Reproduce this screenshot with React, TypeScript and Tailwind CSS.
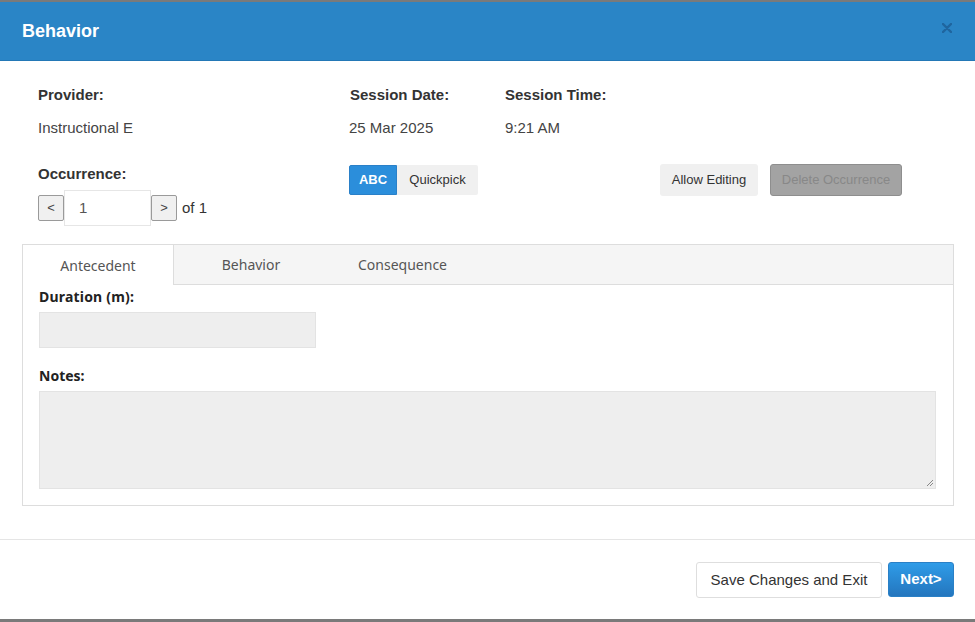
import React from "react"

const arial = { fontFamily: '"Liberation Sans", Arial, sans-serif' }
const segoe = { fontFamily: '"Noto Sans", "Open Sans", sans-serif' }

function Tab({ label, active = false, width }: { label: string; active?: boolean; width: string }) {
  return (
    <div
      className={
        active
          ? `${width} h-full flex items-center justify-center bg-white border-r border-[#dddddd] text-[14px] text-[#555]`
          : `${width} h-full flex items-center justify-center border-b border-[#dddddd] text-[14px] text-[#555]`
      }
      style={segoe}
    >
      {label}
    </div>
  )
}

export default function App() {
  return (
    <div className="w-[975px] h-[622px] bg-[#7a7a7a] pt-[2px] pb-[3px] overflow-hidden" style={arial}>
      <div className="h-full bg-white flex flex-col">
        {/* Header */}
        <div className="h-[59px] shrink-0 bg-[#2a85c6] border-b border-[#2378b6] flex items-center justify-between pl-[22px] pr-[23px]">
          <h4 className="text-white font-bold text-[18px]">Behavior</h4>
          <svg width="10" height="10" viewBox="0 0 10 10" className="mb-[6px] opacity-80">
            <path d="M1 1 L9 9 M9 1 L1 9" stroke="#1d5e96" strokeWidth="2.4" strokeLinecap="round" />
          </svg>
        </div>

        {/* Body */}
        <div className="pt-[26px] pl-[22px] pr-[21px]">
          <div className="pl-[16px]">
            <div className="flex text-[15px] font-bold text-[#333] leading-[16px]">
              <div className="w-[312px]">Provider:</div>
              <div className="w-[155px]">Session Date:</div>
              <div>Session Time:</div>
            </div>
            <div className="flex text-[15px] text-[#444] leading-[16px] mt-[17px]">
              <div className="w-[311px]">Instructional E</div>
              <div className="w-[156px]">25 Mar 2025</div>
              <div>9:21 AM</div>
            </div>

            <div className="flex items-start mt-[29px]">
              <div className="w-[311px] pt-[1px]">
                <div className="text-[15px] font-bold text-[#333] leading-[16px]">Occurrence:</div>
                <div className="flex items-center mt-[8px]">
                  <button className="w-[26px] h-[26px] border border-[#9a9a9a] bg-[#f0f0f0] rounded-[2px] text-[13px] text-[#444] flex items-center justify-center">
                    &lt;
                  </button>
                  <div className="w-[87px] h-[36px] bg-white border border-[#e6e6e6] flex items-center pl-[14px] text-[15px] text-[#555]">
                    1
                  </div>
                  <button className="w-[26px] h-[26px] border border-[#9a9a9a] bg-[#f0f0f0] rounded-[2px] text-[13px] text-[#444] flex items-center justify-center">
                    &gt;
                  </button>
                  <span className="ml-[5px] text-[15px] text-[#333]">of 1</span>
                </div>
              </div>

              <div className="flex">
                <button className="w-[48px] h-[30px] bg-[#2b8edb] border border-[#2a80c8] rounded-l-[2px] text-white font-bold text-[13px]">
                  ABC
                </button>
                <button className="w-[81px] h-[30px] bg-[#f0f0f0] rounded-r-[2px] text-[#333] text-[13px]">
                  Quickpick
                </button>
              </div>

              <div className="flex gap-[12px] ml-[182px] -mt-[1px]">
                <button className="w-[98px] h-[32px] bg-[#f0f0f0] rounded-[3px] text-[#333] text-[13px]">
                  Allow Editing
                </button>
                <button className="w-[132px] h-[32px] bg-[#a3a3a3] border border-[#8e8e8e] rounded-[3px] text-[#888] text-[13px]">
                  Delete Occurrence
                </button>
              </div>
            </div>
          </div>

          {/* Tabs panel */}
          <div className="mt-[18px] border border-[#dddddd]">
            <div className="h-[40px] flex bg-[#f5f5f5]">
              <Tab label="Antecedent" active width="w-[151px]" />
              <Tab label="Behavior" width="w-[154px]" />
              <Tab label="Consequence" width="w-[149px]" />
              <div className="flex-1 border-b border-[#dddddd]" />
            </div>
            <div className="pl-[16px] pr-[17px] pt-[3px] pb-[16px]" style={segoe}>
              <div className="text-[14px] font-bold text-[#222] leading-[18px] tracking-[0.2px]">Duration (m):</div>
              <div className="mt-[6px] w-[277px] h-[36px] bg-[#eeeeee] border border-[#e3e3e3]" />
              <div className="mt-[19px] text-[14px] font-bold text-[#222] leading-[18px]">Notes:</div>
              <div className="relative mt-[6px] h-[98px] bg-[#eeeeee] border border-[#e3e3e3]">
                <svg width="9" height="9" viewBox="0 0 9 9" className="absolute right-[1px] bottom-[1px]">
                  <path d="M8 2 L2 8 M8 5 L5 8" stroke="#888" strokeWidth="1" />
                </svg>
              </div>
            </div>
          </div>
        </div>

        {/* Footer */}
        <div className="mt-[33px] border-t border-[#e5e5e5] flex justify-end gap-[6px] pt-[22px] pr-[21px]">
          <button className="w-[186px] h-[36px] bg-white border border-[#dedede] rounded-[3px] text-[15px] text-[#333]">
            Save Changes and Exit
          </button>
          <button className="w-[66px] h-[35px] bg-gradient-to-b from-[#2f9ce8] to-[#2476be] border border-[#2a80c6] rounded-[3px] text-[15px] font-bold text-white">
            Next&gt;
          </button>
        </div>
      </div>
    </div>
  )
}
